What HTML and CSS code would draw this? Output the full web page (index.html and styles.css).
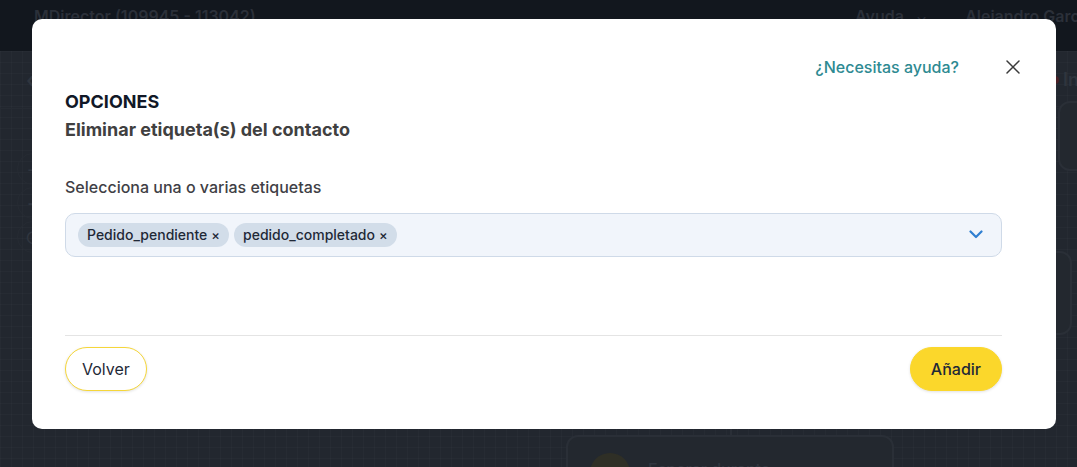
FILE: index.html
```html
<!DOCTYPE html>
<html lang="es">
<head>
<meta charset="utf-8">
<title>Eliminar etiqueta(s) del contacto</title>
<link rel="stylesheet" href="styles.css">
</head>
<body>
<div class="app">
  <header class="topbar">
    <span class="brand">MDirector (109945 - 113042)</span>
    <div class="topbar-right">
      <span class="top-item">Ayuda <span class="caret">⌄</span></span>
      <span class="top-item">Alejandro Garcia</span>
    </div>
  </header>
  <main class="canvas">
    <div class="toolbar">
      <span class="back">‹</span>
      <span class="status"><i class="dot"></i>Inactivo</span>
    </div>
    <div class="zoom-ctrls">
      <span class="zc">+</span>
      <span class="zc">−</span>
      <span class="zc">⊙</span>
    </div>
    <div class="node node-right-a"></div>
    <div class="node node-right-b"></div>
    <div class="connector"></div>
    <div class="node node-bottom">
      <span class="node-icon"></span>
      <span class="node-title">Esperar durante</span>
    </div>
  </main>
</div>

<div class="backdrop">
  <section class="modal" role="dialog" aria-labelledby="modal-title">
    <div class="modal-top">
      <a class="help-link" href="#">¿Necesitas ayuda?</a>
      <button class="close-btn" aria-label="Cerrar">
        <svg width="14" height="14" viewBox="0 0 14 14"><path d="M1 1L13 13M13 1L1 13" stroke="#3b3b3b" stroke-width="1.5" stroke-linecap="round"/></svg>
      </button>
    </div>
    <h2 class="modal-title" id="modal-title">OPCIONES</h2>
    <h3 class="modal-subtitle">Eliminar etiqueta(s) del contacto</h3>

    <label class="field-label">Selecciona una o varias etiquetas</label>
    <div class="multiselect">
      <div class="chips">
        <span class="chip">Pedido_pendiente <span class="chip-x">×</span></span>
        <span class="chip">pedido_completado <span class="chip-x">×</span></span>
      </div>
      <svg class="chevron" width="14" height="9" viewBox="0 0 14 9"><path d="M1.5 1.5L7 7L12.5 1.5" fill="none" stroke="#2f7fd1" stroke-width="2.2" stroke-linecap="round" stroke-linejoin="round"/></svg>
    </div>

    <div class="modal-footer">
      <button class="btn btn-outline">Volver</button>
      <button class="btn btn-primary">Añadir</button>
    </div>
  </section>
</div>
</body>
</html>
```

FILE: styles.css
```css
* { box-sizing: border-box; }

html, body {
  margin: 0;
  padding: 0;
  width: 1077px;
  height: 467px;
  overflow: hidden;
  font-family: Inter, "Noto Sans", "Liberation Sans", sans-serif;
}

body { position: relative; background: #22272f; }

.app {
  display: flex;
  flex-direction: column;
  height: 467px;
  overflow: hidden;
}

.topbar {
  height: 51px;
  flex: none;
  background: #12171e;
  display: flex;
  align-items: flex-start;
  padding: 6px 0 0 34px;
  color: #2b3039;
  font-size: 16px;
  font-weight: 600;
  overflow: hidden;
}

.topbar-right {
  margin-left: auto;
  width: 222px;
  flex: none;
  display: flex;
  gap: 38px;
  white-space: nowrap;
}

.caret { margin-left: 8px; font-size: 14px; }

.canvas {
  flex: 1;
  position: relative;
  overflow: hidden;
  background-color: #22272f;
  background-image:
    linear-gradient(rgba(255,255,255,0.018) 1px, transparent 1px),
    linear-gradient(90deg, rgba(255,255,255,0.018) 1px, transparent 1px);
  background-size: 11px 11px;
}

.toolbar {
  height: 58px;
  border-bottom: 1px solid #262b33;
  display: flex;
  align-items: center;
  justify-content: space-between;
  padding: 0 0 0 26px;
  color: #2f353e;
  font-size: 18px;
  font-weight: 600;
}

.back { font-size: 22px; }

.status {
  display: flex;
  align-items: center;
  gap: 4px;
  margin-right: -55px;
}

.dot {
  width: 8px; height: 8px;
  border-radius: 50%;
  background: #4a2026;
  display: inline-block;
}

.zoom-ctrls {
  position: absolute;
  left: 17px;
  top: 102px;
  display: flex;
  flex-direction: column;
  gap: 2px;
}

.zc {
  width: 32px; height: 32px;
  border-radius: 50%;
  border: 1px solid #262b33;
  color: #30363f;
  display: flex;
  align-items: center;
  justify-content: center;
  font-size: 20px;
}

.node {
  position: absolute;
  border: 2px solid #2a2f37;
  border-radius: 12px;
  background: #23282f;
}

.node-right-a { left: 1058px; top: 50px; width: 120px; height: 70px; }
.node-right-b { left: 980px; top: 200px; width: 92px; height: 84px; }

.connector {
  position: absolute;
  left: 730px;
  top: 370px;
  width: 2px;
  height: 16px;
  background: #2a2f37;
}

.node-bottom {
  left: 566px;
  top: 384px;
  width: 328px;
  height: 80px;
  display: flex;
  align-items: flex-start;
  gap: 18px;
  padding: 16px 0 0 22px;
}

.node-icon {
  width: 40px; height: 40px;
  border-radius: 50%;
  background: #2f2f26;
}

.node-title {
  color: #30363f;
  font-size: 16px;
  font-weight: 500;
  margin-top: 6px;
}

/* Modal */
.backdrop {
  position: absolute;
  inset: 0;
  padding: 19px 0 0 32px;
}

.modal {
  width: 1024px;
  height: 410px;
  background: #ffffff;
  border-radius: 10px;
  padding: 36px 54px 38px 33px;
  display: flex;
  flex-direction: column;
}

.modal-top {
  display: flex;
  align-items: center;
  justify-content: flex-end;
  gap: 47px;
  margin-right: -18px;
  height: 24px;
}

.help-link {
  color: #2e8a92;
  text-decoration: none;
  font-size: 16px;
  line-height: 24px;
  font-weight: 500;
}

.close-btn {
  border: 0;
  background: none;
  padding: 0;
  width: 14px;
  height: 14px;
  display: flex;
  cursor: pointer;
}

.modal-title {
  margin: 9px 0 0;
  font-size: 18px;
  line-height: 28px;
  font-weight: 700;
  color: #111827;
}

.modal-subtitle {
  margin: 0;
  font-size: 18px;
  line-height: 28px;
  font-weight: 650;
  color: #404040;
}

.field-label {
  margin-top: 31px;
  font-size: 16px;
  line-height: 24px;
  font-weight: 500;
  color: #3f3f46;
}

.multiselect {
  margin-top: 14px;
  height: 44px;
  background: #f1f5fb;
  border: 1px solid #cfdae8;
  border-radius: 10px;
  display: flex;
  align-items: center;
  justify-content: space-between;
  padding: 0 18px 1px 12px;
}

.chips { display: flex; gap: 5px; }

.chip {
  height: 24px;
  border-radius: 12px;
  background: #d2dde9;
  color: #1f2937;
  font-size: 14px;
  font-weight: 500;
  padding: 0 9px;
  display: flex;
  align-items: center;
  gap: 4px;
}

.chip-x { font-size: 13px; }

.modal-footer {
  margin-top: auto;
  border-top: 1px solid #e4e4e4;
  padding-top: 11px;
  display: flex;
  justify-content: space-between;
}

.btn {
  height: 44px;
  border-radius: 22px;
  font-family: inherit;
  font-size: 16px;
  color: #1f2937;
  cursor: pointer;
  box-shadow: 0 1px 3px rgba(0,0,0,0.12);
}

.btn-outline {
  background: #ffffff;
  border: 1px solid #f5d63a;
  padding: 0 16px;
  font-weight: 400;
}

.btn-primary {
  background: #fbd72b;
  border: 1px solid #fbd72b;
  padding: 0 20px;
  font-weight: 500;
}
```
